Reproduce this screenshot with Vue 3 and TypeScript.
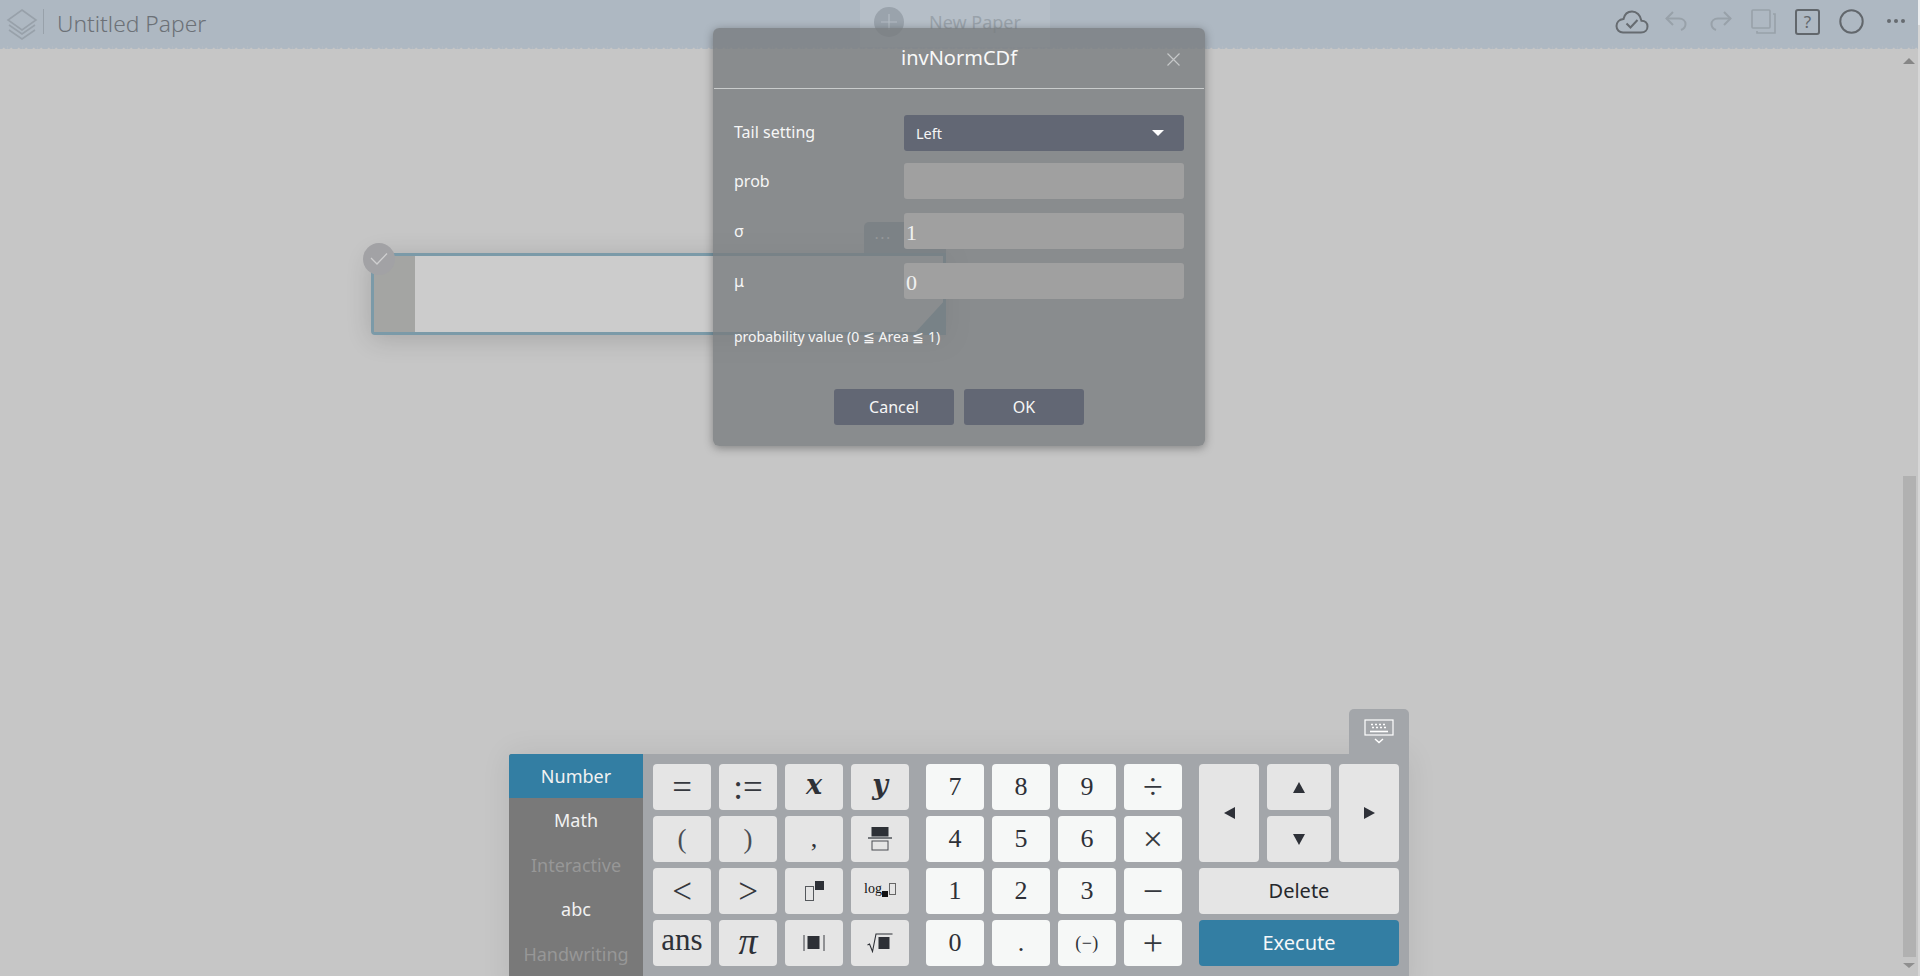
<script setup lang="ts">
interface Key { label?: string; icon?: string; cls?: string }
const tabs = [
  { label: 'Number', cls: 'active' },
  { label: 'Math', cls: '' },
  { label: 'Interactive', cls: 'off' },
  { label: 'abc', cls: '' },
  { label: 'Handwriting', cls: 'off' },
]
const leftKeys: Key[] = [
  { label: '=', cls: 'rel' }, { label: ':=', cls: 'rel' }, { label: 'x', cls: 'bi' }, { label: 'y', cls: 'bi' },
  { label: '(', cls: 'paren' }, { label: ')', cls: 'paren' }, { label: ',' }, { icon: 'frac' },
  { label: '<', cls: 'rel' }, { label: '>', cls: 'rel' }, { icon: 'pow' }, { icon: 'log' },
  { label: 'ans', cls: 'ans' }, { label: 'π', cls: 'pi' }, { icon: 'abs' }, { icon: 'sqrt' },
]
const numKeys: Key[] = [
  { label: '7' }, { label: '8' }, { label: '9' }, { label: '÷', cls: 'op' },
  { label: '4' }, { label: '5' }, { label: '6' }, { label: '×', cls: 'op' },
  { label: '1' }, { label: '2' }, { label: '3' }, { label: '−', cls: 'op' },
  { label: '0' }, { label: '.' }, { label: '(−)', cls: 'neg' }, { label: '+', cls: 'op' },
]
const fields = [
  { label: 'prob', value: '' },
  { label: 'σ', value: '1' },
  { label: 'μ', value: '0' },
]
</script>

<template>
  <div class="page">
    <div class="main">
      <header class="topbar">
        <div class="brand">
          <svg class="layers" width="32" height="32" viewBox="0 0 32 32" fill="none" stroke="#98a1aa" stroke-width="1.6">
            <path d="M16 2 L30 12 L16 22 L2 12 Z" />
            <path d="M3 17 L16 26 L29 17" />
            <path d="M3 22 L16 31 L29 22" />
          </svg>
          <span class="divider"></span>
          <span class="title">Untitled Paper</span>
        </div>
        <div class="new-paper">
          <span class="plus">
            <svg width="16" height="16" viewBox="0 0 16 16" stroke="#b4bcc4" stroke-width="1.2"><path d="M8 0V16M0 8H16" /></svg>
          </span>
          <span class="new-label">New Paper</span>
        </div>
        <div class="tools">
          <svg width="34" height="24" viewBox="0 0 34 24" fill="none" stroke="#666b70" stroke-width="2">
            <path d="M8 22.5 H26 C30 22.5 32.5 20 32.5 16.5 C32.5 13 30 10.8 26.5 10.8 C25.5 5 21.5 1.5 17 1.5 C12.5 1.5 9.5 4.5 8.5 9 C4 9.5 1.5 12.5 1.5 16 C1.5 20 4.5 22.5 8 22.5 Z" />
            <path d="M11.5 13.5 L15.5 17.5 L22.5 10" />
          </svg>
          <svg class="t-undo" width="22" height="20" viewBox="0 0 22 20" fill="none" stroke="#98a1a9" stroke-width="2">
            <path d="M8 1 L1.5 7.5 L8 14" />
            <path d="M1.5 7.5 H14 C18 7.5 20.5 10 20.5 13 C20.5 16 18.5 18 16 19" />
          </svg>
          <svg class="t-redo" width="22" height="20" viewBox="0 0 22 20" fill="none" stroke="#98a1a9" stroke-width="2">
            <path d="M14 1 L20.5 7.5 L14 14" />
            <path d="M20.5 7.5 H8 C4 7.5 1.5 10 1.5 13 C1.5 16 3.5 18 6 19" />
          </svg>
          <svg class="t-copy" width="25" height="25" viewBox="0 0 25 25" fill="none" stroke="#98a1a9" stroke-width="1.6">
            <rect x="1" y="1" width="18" height="18" rx="1" />
            <path d="M22 5 H24 V24 H6 V22" />
          </svg>
          <span class="t-help">?</span>
          <svg class="t-circle" width="25" height="25" viewBox="0 0 25 25" fill="none" stroke="#62676c" stroke-width="2">
            <circle cx="12.5" cy="12.5" r="11.2" />
          </svg>
          <span class="t-dots"><i></i><i></i><i></i></span>
        </div>
      </header>
      <div class="zigzag"></div>

      <div class="workspace">
        <div class="canvas">
          <div class="cell">
            <div class="cell-tab"><span>···</span></div>
            <div class="cell-gutter"></div>
            <div class="cell-fold"></div>
            <span class="cell-check">
              <svg width="18" height="14" viewBox="0 0 18 14" fill="none" stroke="#cfcfd0" stroke-width="1.3"><path d="M1 6 L7 12 L17 1.5" /></svg>
            </span>
          </div>
        </div>
        <div class="scrollbar">
          <span class="arrow up"></span>
          <span class="thumb"></span>
          <span class="arrow down"></span>
        </div>
      </div>
    </div>
    <div class="edge"></div>

    <section class="keyboard">
      <div class="kb-toggle">
        <svg width="30" height="25" viewBox="0 0 30 25" fill="none" stroke="#fff">
          <rect x="1" y="1" width="28" height="15" stroke-width="1.2" />
          <path d="M7 5.5H23M8 8.5H22" stroke-dasharray="2 2" stroke-width="1.4" />
          <path d="M6 12.5H24" stroke-width="1.6" />
          <path d="M11 20 L15 23.5 L19 20" stroke-width="1.5" />
        </svg>
      </div>
      <nav class="kb-tabs">
        <div v-for="t in tabs" :key="t.label" class="kb-tab" :class="t.cls">{{ t.label }}</div>
      </nav>
      <div class="kb-pads">
        <div class="pad">
          <button v-for="(k, i) in leftKeys" :key="i" class="key" :class="k.cls">
            <template v-if="k.label">{{ k.label }}</template>
            <svg v-else-if="k.icon === 'frac'" width="24" height="24" viewBox="0 0 24 24">
              <rect x="3.5" y="0" width="17" height="9.5" fill="#2d3036" />
              <rect x="0" y="10" width="24" height="2" fill="#75787c" />
              <rect x="4" y="14" width="16" height="9" fill="none" stroke="#4a4d52" stroke-width="1" />
            </svg>
            <svg v-else-if="k.icon === 'pow'" width="20" height="20" viewBox="0 0 20 20">
              <rect x="1.5" y="5.5" width="8" height="14" fill="none" stroke="#55585c" stroke-width="1" />
              <rect x="11" y="0" width="9" height="9" fill="#2d3036" />
            </svg>
            <span v-else-if="k.icon === 'log'" class="log">log<i class="log-sq"></i><i class="log-box"></i></span>
            <svg v-else-if="k.icon === 'abs'" width="22" height="18" viewBox="0 0 22 18">
              <path d="M1 1V17M21 1V17" stroke="#3a3d42" stroke-width="1" />
              <rect x="4.5" y="2" width="12" height="13" fill="#2d3036" />
            </svg>
            <svg v-else-if="k.icon === 'sqrt'" width="26" height="20" viewBox="0 0 26 20">
              <path d="M0.5 12 L2.5 11 L5.5 18.5 L9 1 H25.5" fill="none" stroke="#2d3036" stroke-width="1.1" />
              <rect x="11.5" y="4" width="11" height="12" fill="#2d3036" />
            </svg>
          </button>
        </div>
        <div class="pad numpad">
          <button v-for="(k, i) in numKeys" :key="i" class="key num" :class="k.cls">{{ k.label }}</button>
        </div>
        <div class="nav">
          <button class="key arrow-key left-key"><span class="tri tl"></span></button>
          <button class="key arrow-key up-key"><span class="tri tu"></span></button>
          <button class="key arrow-key right-key"><span class="tri tr"></span></button>
          <button class="key arrow-key down-key"><span class="tri td"></span></button>
          <button class="key wide del">Delete</button>
          <button class="key wide exec">Execute</button>
        </div>
      </div>
    </section>

    <section class="dialog">
      <header class="dlg-head">
        <h2 class="dlg-title">invNormCDf</h2>
        <svg class="dlg-close" width="13" height="13" viewBox="0 0 13 13" stroke="#c5c7c8" stroke-width="1.2"><path d="M0.5 0.5L12.5 12.5M12.5 0.5L0.5 12.5" /></svg>
      </header>
      <div class="dlg-body">
        <div class="row first">
          <span class="row-label">Tail setting</span>
          <div class="select"><span>Left</span><i class="caret"></i></div>
        </div>
        <div v-for="f in fields" :key="f.label" class="row">
          <span class="row-label">{{ f.label }}</span>
          <div class="input">{{ f.value }}</div>
        </div>
        <p class="hint">probability value (0 ≦ Area ≦ 1)</p>
        <div class="actions">
          <button class="btn">Cancel</button>
          <button class="btn">OK</button>
        </div>
      </div>
    </section>
  </div>
</template>

<style>
html, body { margin: 0; padding: 0; overflow: hidden; background: #c6c6c6; }
</style>

<style scoped>
.page {
  position: relative;
  display: flex;
  height: 976px;
  width: 1920px;
  overflow: hidden;
  font-family: "Noto Sans", "Open Sans", sans-serif;
  background: #c6c6c6;
}
.main { flex: 1; display: flex; flex-direction: column; min-width: 0; }
.edge { width: 2px; background: linear-gradient(#eceef0 0, #eceef0 25px, #d6d6d6 25px); }

.topbar {
  height: 46px;
  flex: none;
  background: #aeb8c2;
  display: flex;
  align-items: flex-start;
  position: relative;
}
.zigzag {
  height: 3px;
  flex: none;
  background-color: #c6c6c6;
  background-image: linear-gradient(135deg, #aeb8c2 50%, transparent 50%), linear-gradient(225deg, #aeb8c2 50%, transparent 50%);
  background-size: 7.5px 3.75px;
  background-repeat: repeat-x;
}
.brand { display: flex; align-items: flex-start; width: 860px; flex: none; }
.layers { margin: 8px 0 0 6px; }
.divider { width: 1px; height: 25px; margin: 9px 0 0 5px; background: #98a1aa; }
.title { margin: 8px 0 0 13px; font-size: 22.8px; line-height: 32px; font-weight: 300; color: #6c7177; }
.new-paper {
  width: 190px;
  height: 47px;
  flex: none;
  background: rgba(255, 255, 255, 0.09);
  display: flex;
  align-items: flex-start;
}
.plus {
  width: 30px;
  height: 30px;
  border-radius: 50%;
  background: #9aa3ac;
  margin: 7px 0 0 14px;
  display: flex;
  align-items: center;
  justify-content: center;
}
.new-label { margin: 10px 0 0 25px; font-size: 18px; line-height: 24px; color: #99a2aa; }
.tools { flex: 1; display: flex; align-items: flex-start; padding: 10px 0 0 565px; }
.tools > svg { flex: none; }
.t-undo { margin: 1px 0 0 16px; }
.t-redo { margin: 1px 0 0 23px; }
.t-copy { margin: -1px 0 0 19px; }
.t-help {
  width: 21px;
  height: 22px;
  margin: -1px 0 0 19px;
  flex: none;
  border: 2px solid #62676c;
  border-radius: 3px;
  color: #62676c;
  font-size: 17px;
  line-height: 22px;
  text-align: center;
}
.t-circle { margin: -1px 0 0 19px; }
.t-dots { display: flex; gap: 3px; margin: 9px 0 0 23px; }
.t-dots i { width: 4px; height: 4px; border-radius: 50%; background: #666b70; }

.workspace { flex: 1; display: flex; min-height: 0; }
.canvas { flex: 1; position: relative; }
.cell {
  position: absolute;
  left: 371px;
  top: 204px;
  width: 575px;
  height: 82px;
  box-sizing: border-box;
  border: 3px solid #7b9aa8;
  border-radius: 0 0 0 4px;
  background: #cccccc;
  box-shadow: 0 4px 26px rgba(0, 0, 0, 0.16);
}
.cell-gutter { position: absolute; left: 0; top: 0; bottom: 0; width: 41px; background: #a4a5a3; }
.cell-check {
  position: absolute;
  left: -11px;
  top: -13px;
  width: 32px;
  height: 32px;
  border-radius: 50%;
  background: #a2a2a5;
  display: flex;
  align-items: center;
  justify-content: center;
}
.cell-tab {
  position: absolute;
  right: -3px;
  top: -34px;
  width: 82px;
  height: 31px;
  border-radius: 5px 5px 0 0;
  background: #8e9aa2;
  color: #ffffff;
  text-align: center;
  font-size: 14px;
  line-height: 31px;
  letter-spacing: 2px;
}
.cell-tab span { display: block; margin-right: 43px; }
.cell-fold {
  position: absolute;
  right: -3px;
  bottom: -3px;
  width: 33px;
  height: 36px;
  background: #7b9aa8;
  clip-path: polygon(100% 0, 100% 100%, 0 100%);
  border-radius: 0 0 4px 0;
}

.scrollbar {
  width: 18px;
  flex: none;
  position: relative;
  display: flex;
  flex-direction: column;
  align-items: flex-start;
}
.thumb { width: 13px; height: 481px; background: #b1b1b1; margin: 412px 0 0 3px; }
.arrow { width: 0; height: 0; border-left: 6px solid transparent; border-right: 6px solid transparent; margin-left: 3px; }
.arrow.up { border-bottom: 6px solid #868686; margin-top: 9px; }
.arrow.down { border-top: 5px solid #8f8f8f; margin-top: 6px; }

.keyboard {
  position: absolute;
  left: 509px;
  top: 754px;
  width: 900px;
  height: 240px;
  display: flex;
  background: #a3a6aa;
  border-radius: 3px 0 0 0;
  box-shadow: 0 0 30px rgba(0, 0, 0, 0.08);
}
.kb-toggle {
  position: absolute;
  right: 0;
  top: -45px;
  width: 60px;
  height: 45px;
  background: #a3a6aa;
  border-radius: 5px 5px 0 0;
  display: flex;
  justify-content: center;
  padding-top: 10px;
  box-sizing: border-box;
}
.kb-tabs { width: 134px; flex: none; background: #797979; border-radius: 3px 0 0 0; }
.kb-tab { height: 44.4px; line-height: 44px; text-align: center; font-size: 18px; color: #f2f2f2; }
.kb-tab.active { background: #337ea3; border-radius: 3px 0 0 0; }
.kb-tab.off { color: #979797; }
.kb-pads { display: flex; padding: 10px 10px 0 10px; align-items: flex-start; }
.pad {
  display: grid;
  grid-template-columns: repeat(4, 58px);
  grid-auto-rows: 46px;
  gap: 6px 8px;
}
.numpad { margin-left: 17px; }
.key {
  border: 0;
  padding: 0;
  margin: 0;
  border-radius: 4px;
  background: #e5e5e5;
  color: #2e3138;
  font-family: "Liberation Serif", "DejaVu Serif", serif;
  font-size: 26px;
  display: flex;
  align-items: center;
  justify-content: center;
  line-height: 1;
}
.key.rel { font-size: 35px; color: #35383e; }
.key.paren { font-size: 27px; color: #4a4d53; }
.key.bi { font-family: "DejaVu Serif", serif; font-weight: 700; font-style: italic; font-size: 27px; padding-bottom: 6px; box-sizing: border-box; }
.key.ans { font-size: 31px; padding-bottom: 7px; box-sizing: border-box; }
.key.pi { font-style: italic; font-size: 38px; padding-bottom: 4px; box-sizing: border-box; }
.num { background: #f6f8f7; }
.key.op { font-size: 36px; color: #35383e; }
.key.neg { font-size: 18px; letter-spacing: 0.5px; }
.log { display: inline-flex; align-items: flex-start; font-size: 14px; color: #111; position: relative; margin-bottom: 4px; }
.log-sq { width: 6px; height: 6px; background: #111; margin-top: 9px; }
.log-box { width: 5px; height: 10px; border: 1px solid #666; margin: 1px 0 0 1px; }
.nav {
  margin-left: 17px;
  width: 200px;
  display: grid;
  grid-template-columns: 60px 64px 60px;
  grid-auto-rows: 46px;
  gap: 6px 8px;
}
.left-key { grid-row: 1 / span 2; grid-column: 1; }
.up-key { grid-column: 2; grid-row: 1; }
.right-key { grid-row: 1 / span 2; grid-column: 3; }
.down-key { grid-column: 2; grid-row: 2; }
.wide { grid-column: 1 / span 3; font-family: "Noto Sans", sans-serif; font-size: 20px; }
.del { color: #26282c; }
.exec { background: #337ea3; color: #f4f7f9; }
.tri { width: 0; height: 0; display: block; }
.tu { border-left: 6px solid transparent; border-right: 6px solid transparent; border-bottom: 11px solid #2e3138; }
.td { border-left: 6px solid transparent; border-right: 6px solid transparent; border-top: 11px solid #2e3138; }
.tl { border-top: 6px solid transparent; border-bottom: 6px solid transparent; border-right: 11px solid #2e3138; }
.tr { border-top: 6px solid transparent; border-bottom: 6px solid transparent; border-left: 11px solid #2e3138; }

.dialog {
  position: absolute;
  left: 713px;
  top: 28px;
  width: 492px;
  height: 418px;
  box-sizing: border-box;
  border-radius: 6px;
  background: rgba(119, 123, 126, 0.78);
  box-shadow: 0 2px 10px rgba(0, 0, 0, 0.35);
  color: #f1f1f1;
  display: flex;
  flex-direction: column;
}
.dlg-head {
  height: 60px;
  flex: none;
  margin: 0 1px;
  box-sizing: content-box;
  border-bottom: 1px solid #c9cccc;
  position: relative;
  display: flex;
  justify-content: center;
}
.dlg-title { margin: 16px 0 0; font-size: 20px; line-height: 27px; font-weight: 400; color: #f8f8f8; }
.dlg-close { position: absolute; right: 24px; top: 25px; }
.dlg-body { padding: 26px 21px 0; display: flex; flex-direction: column; }
.row { display: flex; align-items: center; justify-content: space-between; height: 36px; margin-bottom: 14px; }
.row.first { margin-bottom: 12px; }
.row-label { font-size: 16px; line-height: 36px; color: #f6f6f6; }
.row.first .row-label { margin-top: -3px; }
.select {
  width: 280px;
  height: 36px;
  box-sizing: border-box;
  padding: 0 12px;
  background: #626774;
  border-radius: 3px;
  display: flex;
  align-items: center;
  justify-content: space-between;
  font-size: 14.5px;
  color: #f6f6f6;
}
.caret { border-left: 6px solid transparent; border-right: 6px solid transparent; border-top: 6px solid #fff; margin-right: 8px; }
.input {
  width: 280px;
  height: 36px;
  box-sizing: border-box;
  padding-left: 2px;
  background: #a0a0a0;
  border-radius: 3px;
  font-family: "Liberation Serif", serif;
  font-size: 22px;
  line-height: 40px;
  color: #f0f0f0;
}
.hint { margin: 14px 0 0; font-size: 14px; line-height: 20px; color: #f6f6f6; }
.actions { display: flex; justify-content: center; gap: 10px; margin-top: 42px; }
.btn {
  width: 120px;
  height: 36px;
  border: 0;
  padding: 0;
  border-radius: 3px;
  background: #626774;
  color: #f6f6f6;
  font-family: "Noto Sans", sans-serif;
  font-size: 16px;
}
</style>
